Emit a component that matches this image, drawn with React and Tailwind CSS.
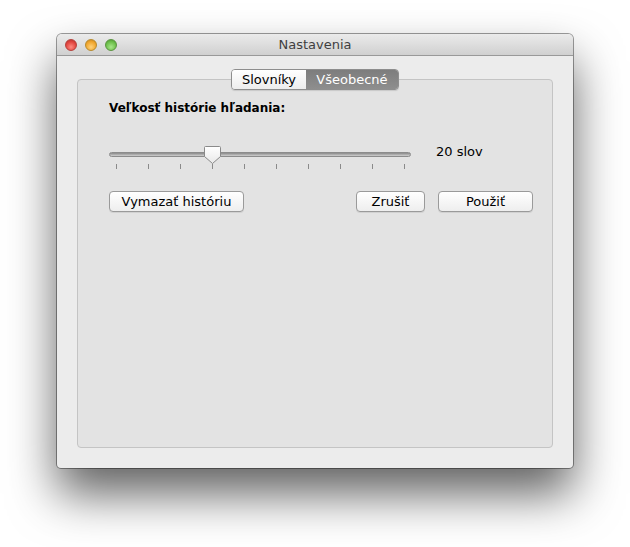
export default function App() {
  const ticks = Array.from({ length: 10 }, (_, i) => i);

  return (
    <div className="w-[630px] h-[547px] bg-white pt-[34px] pl-[57px] font-['DejaVu_Sans',sans-serif] text-[12px] text-black">
      <div className="w-[516px] h-[434px] rounded-t-[5px] rounded-b-[4px] bg-[#ececec] flex flex-col shadow-[0_26px_48px_rgba(0,0,0,0.62),0_0_0_1px_rgba(0,0,0,0.38)]">
        {/* Title bar */}
        <div className="h-[22px] flex items-center relative rounded-t-[5px] bg-gradient-to-b from-[#ebebeb] to-[#d0d0d0] border-b border-[#999999]">
          <div className="flex gap-[8px] pl-[8px]">
            <span className="w-[12px] h-[12px] rounded-full bg-[radial-gradient(circle_at_50%_70%,#ff8a80,#e0443e_60%,#b0302a)] border border-[#b5403b]" />
            <span className="w-[12px] h-[12px] rounded-full bg-[radial-gradient(circle_at_50%_70%,#ffd27a,#f0a52c_60%,#c08020)] border border-[#b88a2a]" />
            <span className="w-[12px] h-[12px] rounded-full bg-[radial-gradient(circle_at_50%_70%,#a8e68a,#6cbf4a_60%,#4a9030)] border border-[#5a9440]" />
          </div>
          <span className="absolute left-0 right-0 text-center text-[13px] text-[#3f3f3f] pointer-events-none">Nastavenia</span>
        </div>

        {/* Content */}
        <div className="flex-1 px-[20px] pt-[23px] pb-[20px]">
          <div className="relative h-full rounded-[4px] border border-[#c4c4c4] bg-[#e3e3e3]">
            {/* Tabs */}
            <div className="absolute left-[153px] top-[-11px] flex h-[21px] rounded-[4px] border border-[#8e8e8e] overflow-hidden shadow-[0_1px_1px_rgba(0,0,0,0.12)]">
              <div className="w-[74px] flex items-center justify-center bg-gradient-to-b from-white to-[#ededed] text-[13px]">Slovníky</div>
              <div className="w-[92px] flex items-center justify-center bg-gradient-to-b from-[#7d7d7d] to-[#8e8e8e] text-white text-[13px]">Všeobecné</div>
            </div>

            <div className="pl-[31px] pt-[19px] pr-[19px]">
              <div className="font-bold text-[12px]">Veľkosť histórie hľadania:</div>

              <div className="flex items-start mt-[28px]">
                <div className="w-[302px] relative h-[28px]">
                  <div className="absolute left-0 right-0 top-[7px] h-[5px] rounded-full bg-gradient-to-b from-[#8a8a8a] to-[#d0d0d0] border border-[#8c8c8c]" />
                  <svg className="absolute left-[94px] top-[0px]" width="19" height="20" viewBox="0 0 19 20">
                    <defs>
                      <linearGradient id="th" x1="0" y1="0" x2="0" y2="1">
                        <stop offset="0" stopColor="#ffffff" />
                        <stop offset="1" stopColor="#e8e8e8" />
                      </linearGradient>
                    </defs>
                    <path d="M2.5 1.5 H16.5 Q17.5 1.5 17.5 2.5 V11.5 L9.5 18.5 L1.5 11.5 V2.5 Q1.5 1.5 2.5 1.5 Z" fill="url(#th)" stroke="#8a8a8a" strokeWidth="1" />
                  </svg>
                  <div className="absolute left-[7px] top-[19px] flex gap-[31px]">
                    {ticks.map((t) => (
                      <span key={t} className="w-px h-[5px] bg-[#8a8a8a]" />
                    ))}
                  </div>
                </div>
                <span className="ml-[25px] mt-[-3px] text-[13px]">20 slov</span>
              </div>

              <div className="flex items-center mt-[18px]">
                <button className="w-[135px] h-[21px] rounded-[4px] border border-[#9a9a9a] bg-gradient-to-b from-white to-[#eeeeee] text-[13px] leading-none shadow-[0_1px_0_rgba(0,0,0,0.08)]">Vymazať históriu</button>
                <button className="ml-auto w-[69px] h-[21px] rounded-[4px] border border-[#9a9a9a] bg-gradient-to-b from-white to-[#eeeeee] text-[13px] leading-none shadow-[0_1px_0_rgba(0,0,0,0.08)]">Zrušiť</button>
                <button className="ml-[13px] w-[95px] h-[21px] rounded-[4px] border border-[#9a9a9a] bg-gradient-to-b from-white to-[#eeeeee] text-[13px] leading-none shadow-[0_1px_0_rgba(0,0,0,0.08)]">Použiť</button>
              </div>
            </div>
          </div>
        </div>
      </div>
    </div>
  );
}
